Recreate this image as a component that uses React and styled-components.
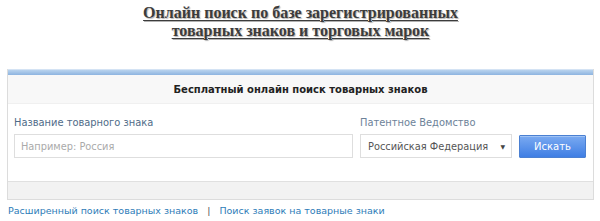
import React from "react";
import styled, { createGlobalStyle } from "styled-components";

const Global = createGlobalStyle`
  html, body { margin: 0; padding: 0; background: #fff; }
  body { width: 600px; height: 221px; overflow: hidden; }
`;

const Page = styled.div`
  width: 600px;
  height: 221px;
  display: flex;
  flex-direction: column;
  box-sizing: border-box;
  padding: 4px 6px 0 7px;
`;

const Title = styled.h1`
  margin: 0;
  text-align: center;
  font-family: "Liberation Serif", serif;
  font-weight: bold;
  font-size: 16px;
  line-height: 18px;
  color: #3c3c3c;
  text-decoration: underline;
  text-decoration-thickness: 1px;
  text-underline-offset: 2px;
  text-shadow: 1px 1px 1px rgba(0,0,0,0.3);
`;

const Panel = styled.div`
  margin-top: 29px;
  border: 1px solid #dcdcdc;
  border-top: none;
  display: flex;
  flex-direction: column;
`;

const TopBar = styled.div`
  height: 5px;
  background: linear-gradient(#b9d3ee, #8db4e0);
  border-top: 1px solid #d4e3f4;
`;

const Header = styled.div`
  height: 28px;
  display: flex;
  align-items: center;
  justify-content: center;
  background: #f8f8f8;
  border-bottom: 1px solid #f0f0f0;
  font-family: "DejaVu Sans", sans-serif;
  font-weight: bold;
  font-size: 10px;
  color: #222;
`;

const Body = styled.div`
  box-sizing: border-box;
  background: #fff;
  padding: 6px 6px 0 6px;
  height: 77px;
  display: grid;
  grid-template-columns: 339px 152px 67px;
  column-gap: 7px;
  align-content: start;
`;

const Label = styled.div`
  font-family: "DejaVu Sans", sans-serif;
  font-size: 9.9px;
  color: ${p => p.$muted ? "#6d8299" : "#4f6b88"};
  height: 24px;
  display: flex;
  align-items: center;
  grid-column: ${p => p.$span || "auto"};
`;

const Input = styled.div`
  box-sizing: border-box;
  height: 24px;
  border: 1px solid #dedede;
  display: flex;
  align-items: center;
  padding-left: 6px;
  font-family: "DejaVu Sans", sans-serif;
  font-size: 9.8px;
  color: #aaa;
  background: #fff;
`;

const Select = styled.div`
  box-sizing: border-box;
  height: 24px;
  border: 1px solid #dedede;
  display: flex;
  align-items: center;
  justify-content: space-between;
  padding: 0 6px 0 7px;
  font-family: "DejaVu Sans", sans-serif;
  font-size: 9.8px;
  color: #555;
  background: #fff;
`;

const Arrow = styled.span`
  font-size: 6px;
  color: #444;
`;

const Button = styled.div`
  box-sizing: border-box;
  height: 23px;
  margin-top: 1px;
  border: 1px solid #4b80d2;
  border-radius: 1px;
  background: linear-gradient(#7aaaf1, #3f7ee4);
  display: flex;
  align-items: center;
  justify-content: center;
  font-family: "DejaVu Sans", sans-serif;
  font-size: 10px;
  color: #fff;
  box-shadow: inset 0 1px 0 rgba(255,255,255,0.3);
`;

const Footer = styled.div`
  height: 17px;
  background: #f2f2f2;
  border-top: 1px solid #e0e0e0;
`;

const Links = styled.div`
  margin-top: 4px;
  padding-left: 1px;
  display: flex;
  gap: 9px;
  font-family: "DejaVu Sans", sans-serif;
  font-size: 9.5px;
  line-height: 13px;
  color: #2d7cb8;
`;

const Link = styled.span`
  color: #2d7cb8;
`;

const Sep = styled.span`
  color: #555;
`;

export default function App() {
  return (
    <>
      <Global />
      <Page>
        <Title>
          Онлайн поиск по базе зарегистрированных<br />
          товарных знаков и торговых марок
        </Title>
        <Panel>
          <TopBar />
          <Header>Бесплатный онлайн поиск товарных знаков</Header>
          <Body>
            <Label>Название товарного знака</Label>
            <Label $muted $span="2 / span 2">Патентное Ведомство</Label>
            <Input>Например: Россия</Input>
            <Select>
              <span>Российская Федерация</span>
              <Arrow>▼</Arrow>
            </Select>
            <Button>Искать</Button>
          </Body>
          <Footer />
        </Panel>
        <Links>
          <Link>Расширенный поиск товарных знаков</Link>
          <Sep>|</Sep>
          <Link>Поиск заявок на товарные знаки</Link>
        </Links>
      </Page>
    </>
  );
}
